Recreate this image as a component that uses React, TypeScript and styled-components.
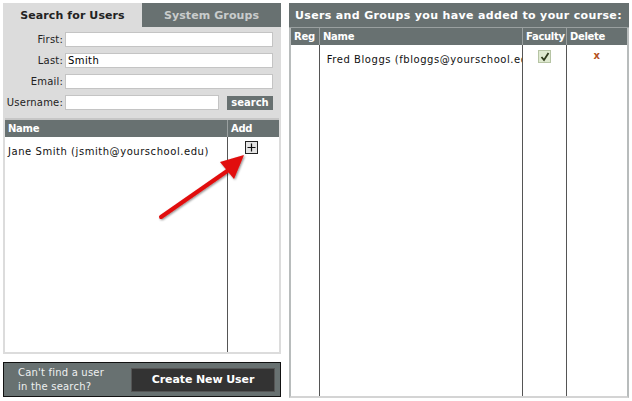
import styled, { createGlobalStyle } from 'styled-components';

const GlobalStyle = createGlobalStyle`
  html, body {
    margin: 0;
    padding: 0;
    background: #ffffff;
  }
  body {
    font-family: "DejaVu Sans", Verdana, sans-serif;
    font-size: 10px;
    color: #111;
  }
`;

const DARK = '#687171';
const LIGHT = '#dcdcdc';

const Page = styled.div`
  position: relative;
  display: flex;
  gap: 8px;
  padding: 3px 3px 0 3px;
  width: 632px;
  height: 401px;
  box-sizing: border-box;
`;

const LeftColumn = styled.div`
  width: 278px;
  display: flex;
  flex-direction: column;
`;

const SearchPanel = styled.div`
  background: ${LIGHT};
  display: flex;
  flex-direction: column;
  height: 351px;
`;

const Tabs = styled.div`
  display: flex;
  height: 24px;
`;

const Tab = styled.div<{ $active?: boolean }>`
  flex: 1;
  display: flex;
  align-items: center;
  justify-content: center;
  font-weight: bold;
  font-size: 11px;
  letter-spacing: 0.1px;
  background: ${({ $active }) => ($active ? LIGHT : DARK)};
  color: ${({ $active }) => ($active ? '#222' : '#c9cccc')};
`;

const Form = styled.div`
  display: grid;
  grid-template-columns: 60px 1fr;
  row-gap: 6px;
  column-gap: 2px;
  padding: 5px 8px 8px 0;
  align-items: center;
`;

const Label = styled.label`
  text-align: right;
  font-size: 10px;
  letter-spacing: 0.2px;
  color: #222;
`;

const Field = styled.div`
  display: flex;
  gap: 8px;
  align-items: center;
`;

const Input = styled.input`
  flex: 1;
  min-width: 0;
  height: 15px;
  box-sizing: border-box;
  border: 1px solid #c4c4c4;
  background: #fff;
  padding: 0 2px;
  font-family: "DejaVu Sans", Verdana, sans-serif;
  font-size: 10px;
  letter-spacing: 0.4px;
  outline: none;
`;

const SearchButton = styled.button`
  width: 46px;
  height: 14px;
  padding: 0;
  border: none;
  background: ${DARK};
  color: #fff;
  font-family: "DejaVu Sans", Verdana, sans-serif;
  font-weight: bold;
  font-size: 10px;
  line-height: 14px;
`;

const TableBox = styled.div`
  flex: 1;
  margin: 0 2px 0 2px;
  border-top: 2px solid #c6c6c6;
  border-bottom: 2px solid ${LIGHT};
  display: grid;
  grid-template-columns: 1fr 52px;
  grid-template-rows: 17px 1fr;
  background: #fff;
`;

const HeadCell = styled.div<{ $divider?: boolean }>`
  background: ${DARK};
  color: #fff;
  font-weight: bold;
  font-size: 10px;
  letter-spacing: -0.3px;
  display: flex;
  align-items: center;
  padding-left: 3px;
  border-left: ${({ $divider }) => ($divider ? '1px solid #9aa0a0' : 'none')};
`;

const BodyCell = styled.div<{ $divider?: boolean; $center?: boolean }>`
  padding: 9px 3px 0 3px;
  border-left: ${({ $divider }) => ($divider ? '1px solid #555' : 'none')};
  display: flex;
  align-items: flex-start;
  justify-content: ${({ $center }) => ($center ? 'center' : 'flex-start')};
  font-size: 10px;
  letter-spacing: 0.55px;
  white-space: nowrap;
  overflow: hidden;
  min-width: 0;
`;

const PlusBox = styled.div`
  width: 11px;
  height: 11px;
  margin-top: -5px;
  margin-left: -4px;
  border: 1px solid #222;
  background: #e4e4e4;
  display: flex;
  align-items: center;
  justify-content: center;
`;

const Footer = styled.div`
  margin-top: 8px;
  height: 35px;
  box-sizing: border-box;
  border: 1px solid #111;
  background: ${DARK};
  display: flex;
  align-items: center;
  justify-content: space-between;
  padding: 0 5px 0 14px;
`;

const FooterNote = styled.div`
  color: #eef0f0;
  font-size: 10px;
  letter-spacing: 0.2px;
  line-height: 14px;
`;

const CreateButton = styled.button`
  width: 144px;
  height: 24px;
  border: 1px solid #555;
  background: #333;
  color: #fff;
  font-family: "DejaVu Sans", Verdana, sans-serif;
  font-weight: bold;
  font-size: 11px;
  letter-spacing: -0.1px;
`;

const RightColumn = styled.div`
  flex: 1;
  display: flex;
  flex-direction: column;
  height: 395px;
`;

const RightTitle = styled.div`
  height: 24px;
  background: ${DARK};
  color: #fff;
  font-weight: bold;
  font-size: 11px;
  letter-spacing: 0.35px;
  display: flex;
  align-items: center;
  padding-left: 6px;
  border-bottom: 1px solid #9aa0a0;
`;

const CourseTable = styled.div`
  flex: 1;
  display: grid;
  grid-template-columns: 28px 203px 44px 1fr;
  grid-template-rows: 17px 1fr;
  border-left: 2px solid #b8bcbc;
  border-right: 2px solid #b8bcbc;
  border-bottom: 2px solid #d4d4d4;
  background: #fff;
`;

const CheckBox = styled.div`
  width: 11px;
  height: 11px;
  margin-top: -4px;
  background: #dfe9d0;
  border: 1px solid #b6c4a4;
  display: flex;
  align-items: center;
  justify-content: center;
`;

const DeleteMark = styled.span`
  color: #b5521e;
  font-weight: bold;
  font-size: 10px;
  margin-top: -4px;
`;

const Arrow = styled.svg`
  position: absolute;
  left: 150px;
  top: 145px;
  pointer-events: none;
`;

export default function App() {
  return (
    <>
      <GlobalStyle />
      <Page>
        <LeftColumn>
          <SearchPanel>
            <Tabs>
              <Tab $active>Search for Users</Tab>
              <Tab>System Groups</Tab>
            </Tabs>
            <Form>
              <Label>First:</Label>
              <Field><Input defaultValue="" /></Field>
              <Label>Last:</Label>
              <Field><Input defaultValue="Smith" /></Field>
              <Label>Email:</Label>
              <Field><Input defaultValue="" /></Field>
              <Label>Username:</Label>
              <Field>
                <Input defaultValue="" />
                <SearchButton>search</SearchButton>
              </Field>
            </Form>
            <TableBox>
              <HeadCell>Name</HeadCell>
              <HeadCell $divider>Add</HeadCell>
              <BodyCell>Jane Smith (jsmith@yourschool.edu)</BodyCell>
              <BodyCell $divider $center>
                <PlusBox>
                  <svg width="9" height="9" viewBox="0 0 9 9">
                    <path d="M4.5 0.5v8M0.5 4.5h8" stroke="#111" strokeWidth="1.2" />
                  </svg>
                </PlusBox>
              </BodyCell>
            </TableBox>
          </SearchPanel>
          <Footer>
            <FooterNote>
              Can't find a user
              <br />
              in the search?
            </FooterNote>
            <CreateButton>Create New User</CreateButton>
          </Footer>
        </LeftColumn>
        <RightColumn>
          <RightTitle>Users and Groups you have added to your course:</RightTitle>
          <CourseTable>
            <HeadCell>Reg</HeadCell>
            <HeadCell $divider>Name</HeadCell>
            <HeadCell $divider>Faculty</HeadCell>
            <HeadCell $divider>Delete</HeadCell>
            <BodyCell />
            <BodyCell $divider>&nbsp;Fred Bloggs (fbloggs@yourschool.edu)</BodyCell>
            <BodyCell $divider $center>
              <CheckBox>
                <svg width="10" height="10" viewBox="0 0 10 10">
                  <path d="M1.5 5l2.5 3L8.5 1" fill="none" stroke="#2f3a1c" strokeWidth="1.8" />
                </svg>
              </CheckBox>
            </BodyCell>
            <BodyCell $divider $center>
              <DeleteMark>x</DeleteMark>
            </BodyCell>
          </CourseTable>
        </RightColumn>
        <Arrow width="110" height="85" viewBox="0 0 110 85">
          <defs>
            <filter id="sh" x="-20%" y="-20%" width="140%" height="140%">
              <feDropShadow dx="1" dy="1" stdDeviation="1.2" floodColor="#000" floodOpacity="0.45" />
            </filter>
          </defs>
          <g filter="url(#sh)">
            <path d="M11 72 L80 24" stroke="#e10b0b" strokeWidth="4" strokeLinecap="round" />
            <path d="M94 10 L70 17 L84 34 Z" fill="#e10b0b" />
          </g>
        </Arrow>
      </Page>
    </>
  );
}
